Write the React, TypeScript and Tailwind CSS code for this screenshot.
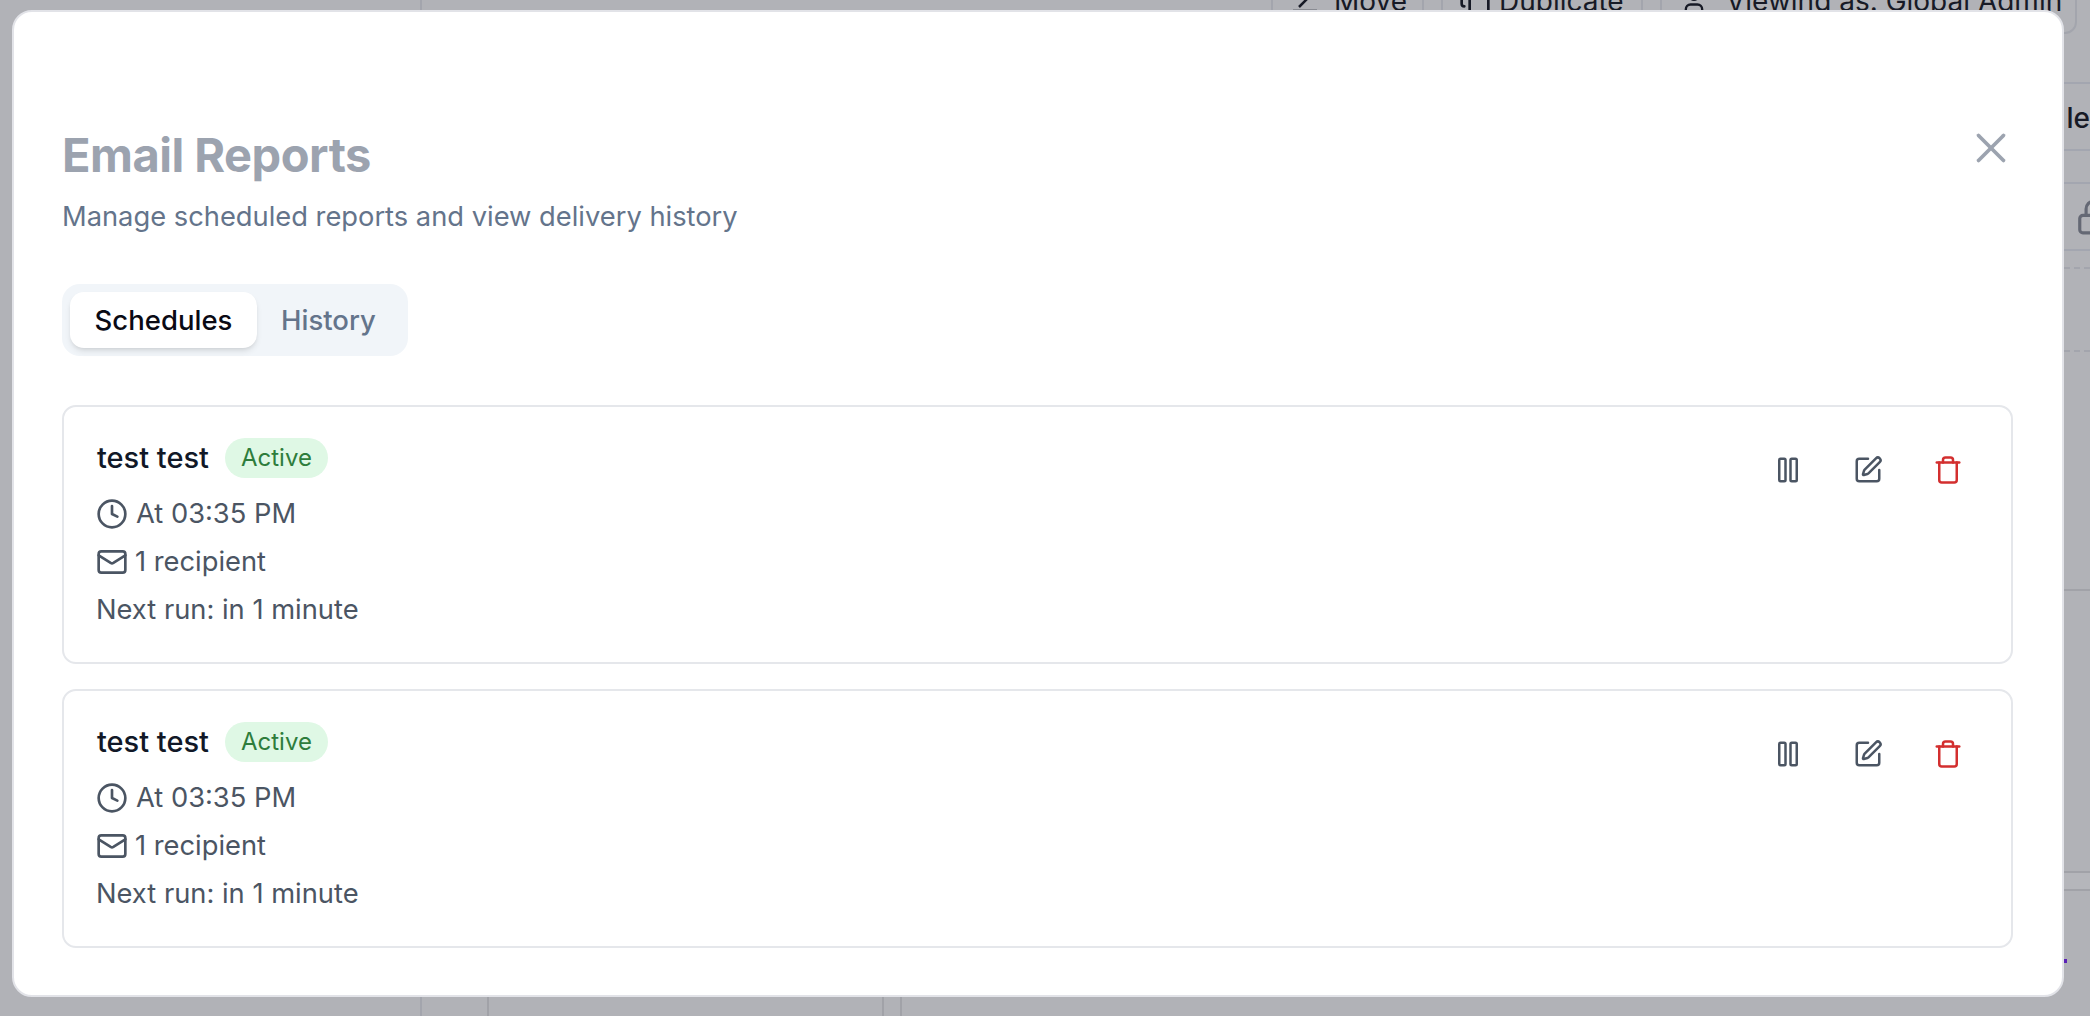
import { Clock, Copy, Lock, Mail, Pause, SquarePen, Trash, User, X } from 'lucide-react';

const ScheduleCard = () => (
  <div className="flex h-[259px] justify-between rounded-[14px] border-2 border-[#e5e7eb] pl-[32px] pr-[34px] pt-[31px]">
    <div className="flex flex-col text-[27.3px] leading-[48px] text-[#4b5563]">
      <div className="mb-[12px] flex h-[40px] items-center gap-[16px]">
        <span className="ml-px text-[29px] font-medium text-[#111827]">test test</span>
        <span className="rounded-full bg-[#dff8e5] px-[16px] text-[24px] leading-[40px] text-[#2e7d3c]">
          Active
        </span>
      </div>
      <div className="flex items-center gap-[8px]">
        <Clock size={32} strokeWidth={2} />
        At 03:35 PM
      </div>
      <div className="flex items-center gap-[7px]">
        <Mail size={32} strokeWidth={2} />1 recipient
      </div>
      <div>Next run: in 1 minute</div>
    </div>
    <div className="flex items-start gap-[50px] pt-[17px] pr-[14px]">
      <Pause size={30} strokeWidth={2} className="text-[#4b5563]" />
      <SquarePen size={30} strokeWidth={2} className="text-[#4b5563]" />
      <Trash size={30} strokeWidth={2} className="text-[#d32f2f]" />
    </div>
  </div>
);

export default function App() {
  return (
    <div className="relative flex h-[1016px] w-[2090px] overflow-hidden bg-[#b1b2b7] font-['Inter',sans-serif]">
      {/* page behind the dialog */}
      <div className="w-[422px] flex-none border-r-2 border-[#a3a5ad]" />
      <div className="flex min-w-0 flex-1 flex-col">
        <div className="-mt-[33px] flex h-[67px] flex-none justify-end gap-[17px] pr-[13px] text-[28px] text-[#171a26]">
          <div className="flex w-[153px] items-center gap-[15px] border-x-2 border-[#a3a5ad] pl-[18px]">
            <svg width="28" height="28" viewBox="0 0 28 28" fill="none" stroke="currentColor" strokeWidth="2.5" className="flex-none">
              <path d="M2 24h24M8 20 24 4" />
            </svg>
            Move
          </div>
          <div className="flex w-[202px] items-center gap-[8px] border-x-2 border-[#a3a5ad] pl-[16px]">
            <Copy size={32} className="flex-none" />
            Duplicate
          </div>
          <div className="flex w-[417px] items-center gap-[18px] rounded-br-[12px] border-2 border-[#a3a5ad] pl-[18px]">
            <User size={28} className="flex-none" />
            <span className="whitespace-nowrap">Viewing as: Global Admin</span>
          </div>
        </div>
        <div className="h-[50px] flex-none border-b-2 border-[#a3a6b0]" />
        <div className="flex h-[67px] flex-none items-center justify-end border-b-2 border-[#a3a6b0] pt-[2px] text-[28px] font-medium text-[#171a26]">
          <span className="whitespace-nowrap">le</span>
        </div>
        <div className="h-[33px] flex-none border-b-2 border-[#a3a6b0]" />
        <div className="flex h-[67px] flex-none items-center justify-end border-b-2 border-[#a3a6b0]">
          <Lock size={38} className="-mr-[23px] flex-none text-[#646874]" />
        </div>
        <div className="h-[18px] flex-none border-b-2 border-dashed border-[#a3a5ad]" />
        <div className="h-[83px] flex-none border-b-2 border-dashed border-[#a3a5ad]" />
        <div className="h-[239px] flex-none border-b-2 border-[#a1a2a8]" />
        <div className="h-[282px] flex-none border-b-2 border-[#a1a2a8]" />
        <div className="h-[18px] flex-none border-b-2 border-[#a1a2a8] bg-[#b5b6bb]" />
        <div className="flex flex-1">
          <div className="w-[67px] flex-none border-r-2 border-[#a1a2a8]" />
          <div className="w-[395px] flex-none border-r-2 border-[#a1a2a8]" />
          <div className="w-[18px] flex-none border-r-2 border-[#a1a2a8]" />
        </div>
      </div>
      <div className="absolute left-[2064px] top-[959px] h-[4px] w-[3px] bg-[#5b21b6]" />

      {/* dialog */}
      <div className="absolute left-[12px] top-[10px] h-[987px] w-[2052px] rounded-[20px] border-2 border-[#e2e3e8] bg-white pl-[48px] pr-[49px] pt-[113px]">
        <X size={50} strokeWidth={1.75} className="absolute right-[46px] top-[111px] text-[#9ca3af]" />
        <h2 className="text-[47px] leading-[60px] font-bold tracking-[-0.5px] text-[#9ca3af]">Email Reports</h2>
        <p className="mt-[14px] text-[27.3px] leading-[36px] text-[#64748b]">
          Manage scheduled reports and view delivery history
        </p>
        <div className="mt-[49px] flex h-[72px] w-[346px] items-center rounded-[18px] bg-[#f1f5f9] px-2 text-[27.5px] font-medium">
          <span className="flex h-[56px] w-[187px] items-center justify-center rounded-[14px] bg-white pt-[2px] text-[#0a0a14] shadow-md">
            Schedules
          </span>
          <span className="pl-6 pt-[2px] text-[#64748b]">History</span>
        </div>
        <div className="mt-[49px] flex flex-col gap-[25px]">
          <ScheduleCard />
          <ScheduleCard />
        </div>
      </div>
    </div>
  );
}
